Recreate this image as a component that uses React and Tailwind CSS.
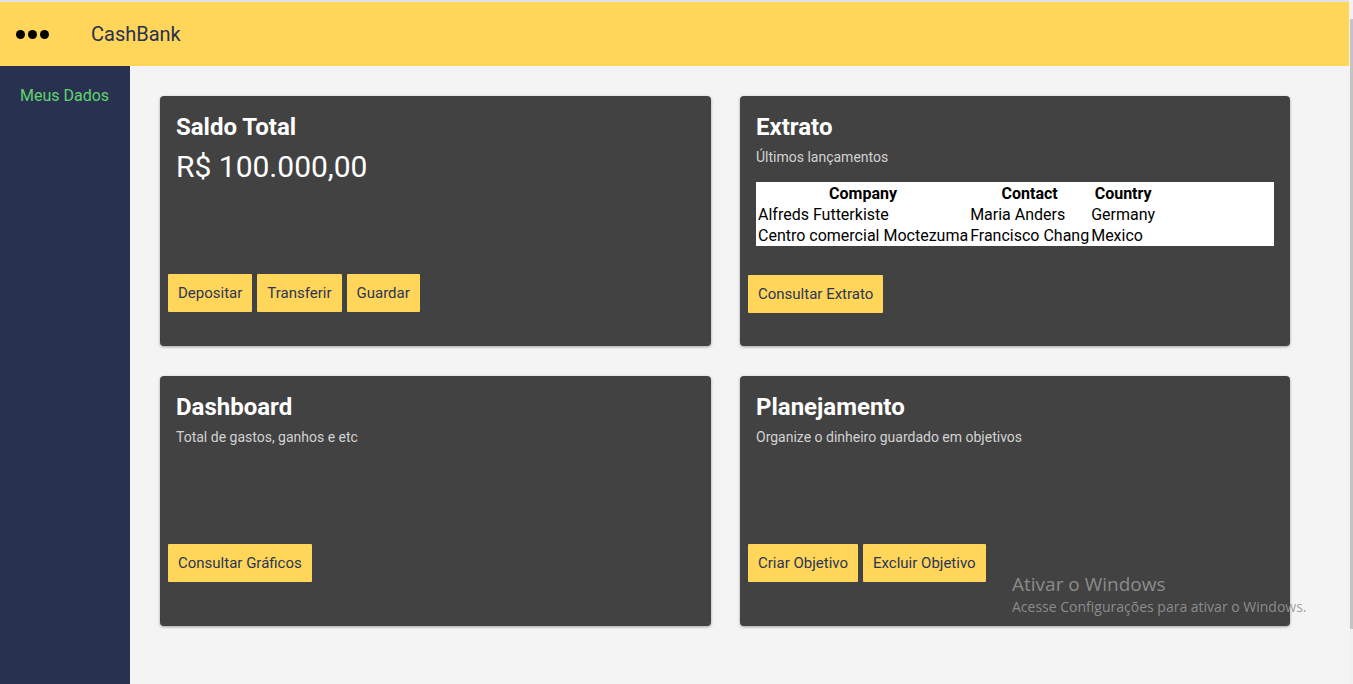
import React from "react";

const roboto = { fontFamily: "Roboto, 'Liberation Sans', sans-serif" };

function Btn({ children }) {
  return (
    <button className="h-[38px] px-[10px] bg-[#ffd55a] text-[#2c3552] text-[15px] leading-[38px] rounded-[1px] cursor-pointer">
      {children}
    </button>
  );
}

function Card({ children }) {
  return (
    <div className="relative h-[250px] bg-[#424242] rounded-[4px] shadow-[0_1px_3px_rgba(0,0,0,0.35)] flex flex-col">
      {children}
    </div>
  );
}

function Title({ children }) {
  return (
    <h2 className="px-4 pt-[15px] text-[24px] leading-[32px] font-bold text-white">{children}</h2>
  );
}

function Sub({ children }) {
  return <p className="px-4 mt-1 text-[14px] leading-[20px] text-[#d2d2d2]">{children}</p>;
}

export default function App() {
  const rows = [
    ["Alfreds Futterkiste", "Maria Anders", "Germany"],
    ["Centro comercial Moctezuma", "Francisco Chang", "Mexico"],
  ];
  return (
    <div className="relative w-[1353px] h-[684px] overflow-hidden flex bg-[#f4f4f4]" style={roboto}>
      <div className="w-[1349px] flex flex-col">
        <div className="h-[2px] bg-[#e2e2e2]" />
        <header className="h-[64px] bg-[#ffd55a] flex items-center pl-4">
          <div className="flex items-center gap-[3px]">
            <span className="w-[9px] h-[9px] rounded-full bg-black" />
            <span className="w-[9px] h-[9px] rounded-full bg-black" />
            <span className="w-[9px] h-[9px] rounded-full bg-black" />
          </div>
          <span className="ml-[42px] text-[20px] text-[#283250]">CashBank</span>
        </header>
        <div className="flex flex-1">
          <aside className="w-[130px] bg-[#283250] pt-[18px] pl-[20px]">
            <span className="text-[16px] leading-[20px] text-[#62d26f]">Meus Dados</span>
          </aside>
          <main className="flex-1 pt-[30px] pl-[30px] pr-[59px]">
            <div className="grid grid-cols-[551px_550px] gap-x-[29px] gap-y-[30px]">
              <Card>
                <Title>Saldo Total</Title>
                <p className="px-4 mt-1 text-[30px] leading-[40px] text-white">R$ 100.000,00</p>
                <div className="mt-[87px] px-2 flex gap-[5px]">
                  <Btn>Depositar</Btn>
                  <Btn>Transferir</Btn>
                  <Btn>Guardar</Btn>
                </div>
              </Card>
              <Card>
                <Title>Extrato</Title>
                <Sub>Últimos lançamentos</Sub>
                <div className="mx-4 mt-[15px] bg-white h-[64px] pt-[1px] pl-[1px]">
                  <table className="text-black text-[16px]">
                    <thead>
                      <tr className="h-[21px]">
                        <th className="px-[1px] text-center font-bold leading-[21px]">Company</th>
                        <th className="px-[1px] text-center font-bold leading-[21px]">Contact</th>
                        <th className="px-[1px] text-center font-bold leading-[21px]">Country</th>
                      </tr>
                    </thead>
                    <tbody>
                      {rows.map((r) => (
                        <tr key={r[0]} className="h-[21px]">
                          {r.map((c) => (
                            <td key={c} className="px-[1px] leading-[21px] whitespace-nowrap">{c}</td>
                          ))}
                        </tr>
                      ))}
                    </tbody>
                  </table>
                </div>
                <div className="mt-[29px] px-2 flex gap-[5px]">
                  <Btn>Consultar Extrato</Btn>
                </div>
              </Card>
              <Card>
                <Title>Dashboard</Title>
                <Sub>Total de gastos, ganhos e etc</Sub>
                <div className="mt-[97px] px-2 flex gap-[5px]">
                  <Btn>Consultar Gráficos</Btn>
                </div>
              </Card>
              <Card>
                <Title>Planejamento</Title>
                <Sub>Organize o dinheiro guardado em objetivos</Sub>
                <div className="mt-[97px] px-2 flex gap-[5px]">
                  <Btn>Criar Objetivo</Btn>
                  <Btn>Excluir Objetivo</Btn>
                </div>
              </Card>
            </div>
          </main>
        </div>
      </div>
      <div className="w-[4px] h-full bg-[#f1f1f1] relative">
        <div className="absolute left-[1px] top-[19px] w-[3px] h-[610px] bg-[#c4c4c4]" />
      </div>
      <div
        className="absolute left-[1012px] top-[571px] pointer-events-none text-[rgba(150,150,150,0.9)]"
        style={{ fontFamily: "'Open Sans', 'Noto Sans', sans-serif" }}
      >
        <div className="text-[19px] leading-[26px]">Ativar o Windows</div>
        <div className="text-[14px] leading-[18px] mt-[1px]">Acesse Configurações para ativar o Windows.</div>
      </div>
    </div>
  );
}
